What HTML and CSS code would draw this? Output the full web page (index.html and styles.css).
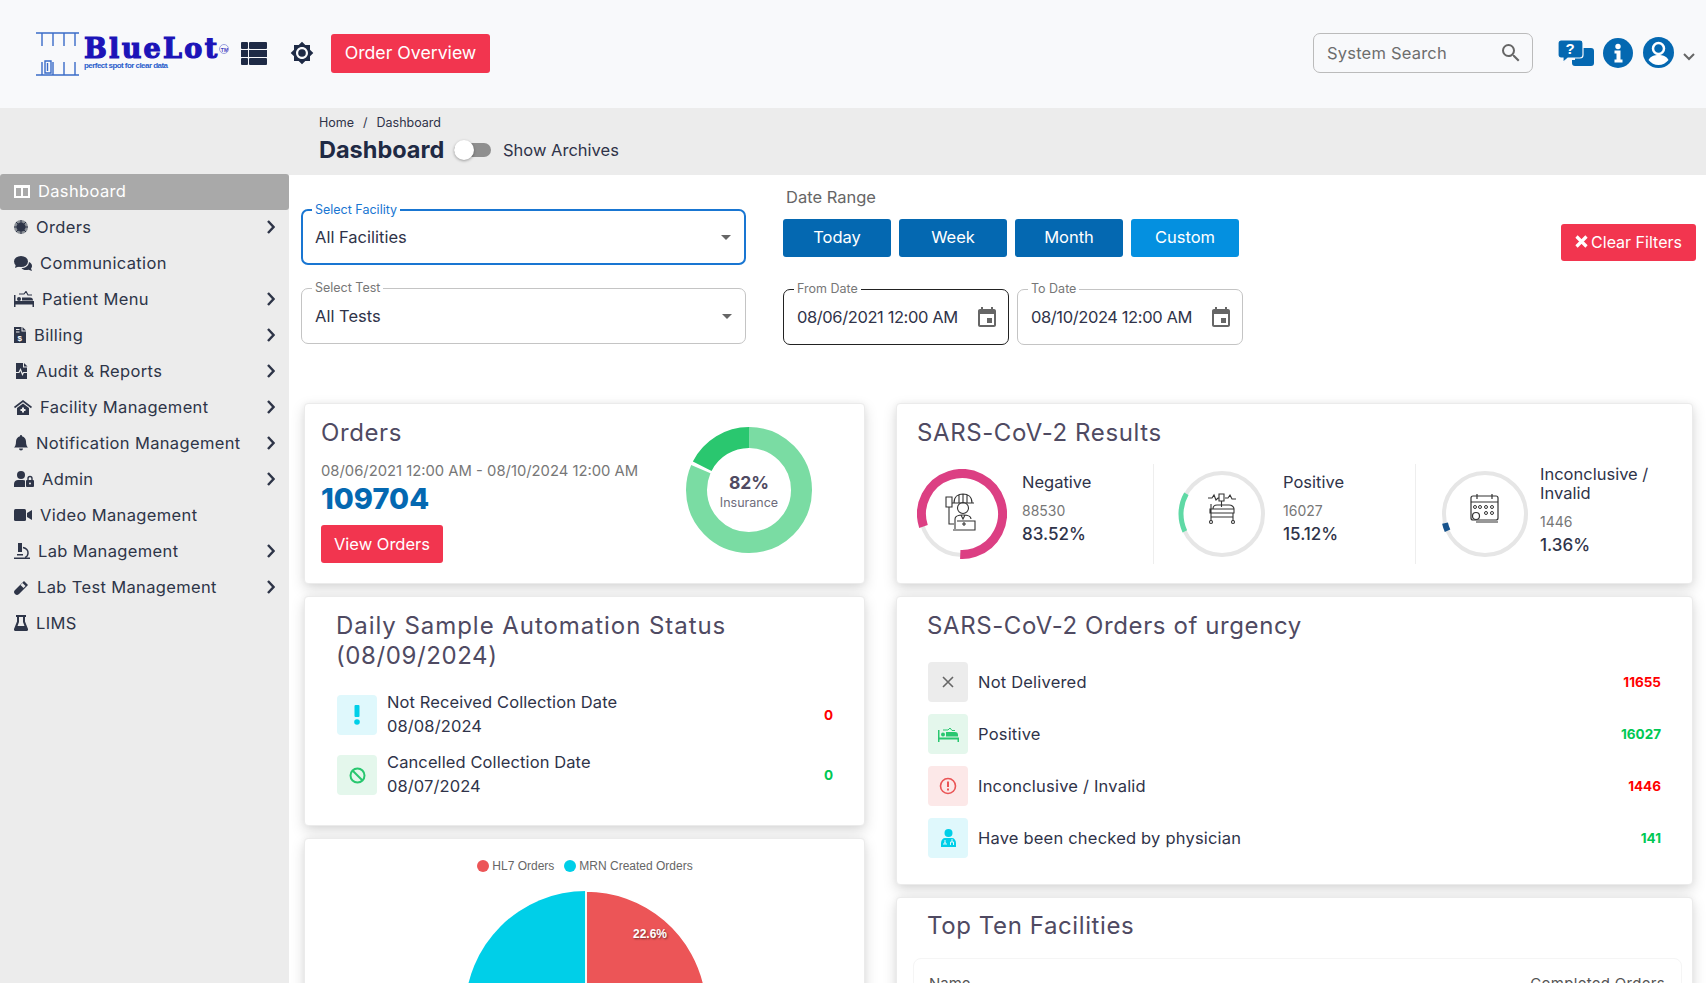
FILE: index.html
```html
<!DOCTYPE html>
<html lang="en">
<head>
<meta charset="utf-8">
<title>BlueLot Dashboard</title>
<link rel="stylesheet" href="styles.css">
</head>
<body>
<header class="topbar">
  <div class="logo">
    <svg class="logo-mark" width="44" height="44" viewBox="0 0 44 44"><g fill="none" stroke="#3a6cc8" stroke-width="1.4"><path d="M0 1h43M6 1v13M17 1v13M28 1v13M39 1v13M0 43h43M6 30v13M28 30v13M39 30v13M17 30v13M9 29h6v12H9zM11.500 31v8"/></g></svg>
    <div class="logo-text">
      <div class="logo-name">BlueLot<span class="logo-tm">TM</span></div>
      <div class="logo-tag">perfect spot for clear data</div>
    </div>
  </div>
  <svg class="tb-list" width="26" height="23" viewBox="0 0 26 23"><g fill="#1e2a45"><rect y="0" width="7" height="7" rx="1"/><rect x="8" y="0" width="18" height="7" rx="1"/><rect y="8" width="7" height="7"/><rect x="8" y="8" width="18" height="7"/><rect y="16" width="7" height="7" rx="1"/><rect x="8" y="16" width="18" height="7" rx="1"/></g></svg>
  <svg class="tb-gear" width="24" height="24" viewBox="0 0 24 24"><path fill="#1e2a45" d="M20 15.310L23.310 12 20 8.690V4h-4.690L12 .69 8.690 4H4v4.690L.69 12 4 15.310V20h4.690L12 23.310 15.310 20H20v-4.690zM12 18c-3.310 0-6-2.690-6-6s2.690-6 6-6 6 2.690 6 6-2.690 6-6 6z"/><circle cx="12" cy="12" r="3.800" fill="#1e2a45"/></svg>
  <button class="btn btn-red btn-overview">Order Overview</button>
  <div class="tb-right">
    <div class="search">
      <span class="search-text">System Search</span>
      <svg width="24" height="24" viewBox="0 0 24 24"><path fill="#666" d="M15.500 14h-.79l-.28-.27A6.471 6.471 0 0 0 16 9.500 6.500 6.500 0 1 0 9.500 16c1.610 0 3.090-.59 4.230-1.570l.27.28v.79l5 4.990L20.490 19l-4.990-5zm-6 0C7.010 14 5 11.990 5 9.500S7.010 5 9.500 5 14 7.010 14 9.500 11.990 14 9.500 14z"/></svg>
    </div>
    <svg class="tb-help" width="36" height="26" viewBox="0 0 36 26"><path fill="#0468b1" d="M17 8h16a3 3 0 0 1 3 3v12a3 3 0 0 1-3 3H17a3 3 0 0 1-3-3v-3h3z"/><path fill="#0468b1" stroke="#f8f9fb" stroke-width="1.200" d="M3 0h19a3 3 0 0 1 3 3v12a3 3 0 0 1-3 3H10l-5 4.500V18H3a3 3 0 0 1-3-3V3a3 3 0 0 1 3-3z"/><text x="12" y="14" class="help-q">?</text></svg>
    <svg class="tb-info" width="30" height="30" viewBox="0 0 30 30"><circle cx="15" cy="15" r="15" fill="#0468b1"/><circle cx="15" cy="8.500" r="2.700" fill="#fff"/><path fill="#fff" d="M11.500 12.500h6v9h2v3h-8v-3h2v-6h-2z"/></svg>
    <svg class="tb-user" width="31" height="31" viewBox="0 0 31 31"><circle cx="15.500" cy="15.500" r="15.500" fill="#0468b1"/><circle cx="15.500" cy="11.500" r="5.500" fill="none" stroke="#fff" stroke-width="2.500"/><path fill="#fff" d="M5.500 23c2-4 6-5 10-5s8 1 10 5c-2.500 3-6 5-10 5s-7.500-2-10-5z"/></svg>
    <svg class="tb-caret" width="12" height="8" viewBox="0 0 12 8"><path fill="none" stroke="#666" stroke-width="2" d="M1 1l5 5 5-5"/></svg>
  </div>
</header>

<section class="crumbbar">
  <div class="crumbs"><span>Home</span><span class="crumb-sep">/</span><span>Dashboard</span></div>
  <div class="title-row">
    <h1>Dashboard</h1>
    <span class="toggle"><span class="toggle-thumb"></span></span>
    <span class="toggle-label">Show Archives</span>
  </div>
</section>

<div class="layout">
  <aside class="sidebar">
    <a class="nav active"><span class="nav-main"><svg class="ic16" width="16" height="13" viewBox="0 0 16 13"><path fill="#fff" d="M0 0h16v13H0zM2 3v8h5V3zm7 0v8h5V3z" fill-rule="evenodd"/></svg>Dashboard</span></a>
    <a class="nav"><span class="nav-main"><svg width="14" height="16" viewBox="0 0 14 16"><circle cx="7" cy="8" r="7" fill="#8a8f96"/><circle cx="7" cy="8" r="4.500" fill="#2e3548"/><path stroke="#2e3548" stroke-width="1" d="M7 1v14M0 8h14M2 3l10 10M12 3L2 13"/></svg>Orders</span><svg class="chev" width="8" height="14" viewBox="0 0 8 14"><path fill="none" stroke="#2e3548" stroke-width="2.400" d="M1 1l5.500 6L1 13"/></svg></a>
    <a class="nav"><span class="nav-main"><svg width="18" height="15" viewBox="0 0 18 15"><ellipse cx="7" cy="5.500" rx="7" ry="5.500" fill="#2e3548"/><path fill="#2e3548" d="M2 8L1 12l5-2zM7.500 12c4 0 7-2 7.500-6 2 .8 3 2.300 3 4 0 1-.5 2-1 2.600l1 2.400-3.500-1.200C11 14.500 9 14 7.500 12z"/></svg>Communication</span></a>
    <a class="nav"><span class="nav-main"><svg width="20" height="16" viewBox="0 0 20 16"><path fill="#2e3548" d="M0 4h1.500v6H20v6h-1.500v-2.500h-17V16H0z"/><circle cx="5" cy="8" r="2" fill="#2e3548"/><path fill="#2e3548" d="M8 6.500h8a3 3 0 0 1 3 3H8z"/><path fill="none" stroke="#2e3548" stroke-width="1.200" d="M5 3h5l2-2.500L14 4h4"/></svg>Patient Menu</span><svg class="chev" width="8" height="14" viewBox="0 0 8 14"><path fill="none" stroke="#2e3548" stroke-width="2.400" d="M1 1l5.500 6L1 13"/></svg></a>
    <a class="nav"><span class="nav-main"><svg width="12" height="16" viewBox="0 0 12 16"><path fill="#2e3548" d="M0 0h7.500v4.500H12V16H0z"/><path fill="#2e3548" d="M8.500 0L12 3.500H8.500z"/><path stroke="#ececec" stroke-width="1" d="M2 2.500h3.500M2 5h3.500"/><text x="6" y="14" class="ic-dollar">$</text></svg>Billing</span><svg class="chev" width="8" height="14" viewBox="0 0 8 14"><path fill="none" stroke="#2e3548" stroke-width="2.400" d="M1 1l5.500 6L1 13"/></svg></a>
    <a class="nav"><span class="nav-main"><svg width="14" height="16" viewBox="0 0 14 16"><path fill="#2e3548" d="M2 0h7v4.500h4V16H2z"/><path fill="#2e3548" d="M10 0l3.500 3.500H10z"/><path fill="none" stroke="#ececec" stroke-width="1.200" d="M0 9.500h5l1.500-3 2 5 1-2h4.500"/></svg>Audit &amp; Reports</span><svg class="chev" width="8" height="14" viewBox="0 0 8 14"><path fill="none" stroke="#2e3548" stroke-width="2.400" d="M1 1l5.500 6L1 13"/></svg></a>
    <a class="nav"><span class="nav-main"><svg width="18" height="15" viewBox="0 0 18 15"><path fill="none" stroke="#2e3548" stroke-width="1.600" d="M.5 7.500L9 1l8.500 6.500"/><path fill="#2e3548" d="M3 8l6-4.500L15 8v7H3z"/><path stroke="#ececec" stroke-width="2" d="M9 7.500v5M6.500 10h5"/></svg>Facility Management</span><svg class="chev" width="8" height="14" viewBox="0 0 8 14"><path fill="none" stroke="#2e3548" stroke-width="2.400" d="M1 1l5.500 6L1 13"/></svg></a>
    <a class="nav"><span class="nav-main"><svg width="14" height="16" viewBox="0 0 14 16"><path fill="#2e3548" d="M7 0c.7 0 1 .5 1 1.200C10.500 1.800 12 4 12 6.500c0 3.500 1 5 2 6H0c1-1 2-2.500 2-6C2 4 3.500 1.800 6 1.200 6 .5 6.300 0 7 0zM5 13.500h4a2 2 0 0 1-4 0z"/></svg>Notification Management</span><svg class="chev" width="8" height="14" viewBox="0 0 8 14"><path fill="none" stroke="#2e3548" stroke-width="2.400" d="M1 1l5.500 6L1 13"/></svg></a>
    <a class="nav"><span class="nav-main"><svg width="20" height="16" viewBox="0 0 20 16"><circle cx="7" cy="4" r="4" fill="#2e3548"/><path fill="#2e3548" d="M0 16v-3c0-2.500 2-4 4-4h5c.8 0 1.500.2 2 .5V16z"/><rect x="12" y="9" width="8" height="7" rx="1" fill="#2e3548"/><path fill="none" stroke="#2e3548" stroke-width="1.400" d="M14 9V7.500a2 2 0 0 1 4 0V9"/><circle cx="16" cy="12.500" r="1" fill="#ececec"/></svg>Admin</span><svg class="chev" width="8" height="14" viewBox="0 0 8 14"><path fill="none" stroke="#2e3548" stroke-width="2.400" d="M1 1l5.500 6L1 13"/></svg></a>
    <a class="nav"><span class="nav-main"><svg width="18" height="12" viewBox="0 0 18 12"><rect width="12" height="12" rx="1.500" fill="#2e3548"/><path fill="#2e3548" d="M13 4l5-3v10l-5-3z"/></svg>Video Management</span></a>
    <a class="nav"><span class="nav-main"><svg width="16" height="16" viewBox="0 0 16 16"><path fill="#2e3548" d="M4 0h4v9H4zM0 14.500h16V16H0zM3 11h6v1.500H3z"/><path fill="none" stroke="#2e3548" stroke-width="1.500" d="M9 4.500c3 .5 5.500 3 5 6-.3 2-1.500 3.500-3 4"/></svg>Lab Management</span><svg class="chev" width="8" height="14" viewBox="0 0 8 14"><path fill="none" stroke="#2e3548" stroke-width="2.400" d="M1 1l5.500 6L1 13"/></svg></a>
    <a class="nav"><span class="nav-main"><svg width="15" height="15" viewBox="0 0 15 15"><path fill="#2e3548" d="M10 1l4 4-9 9a2.800 2.800 0 0 1-4-4z"/><path fill="#ececec" d="M6.500 5l3 3 2-2-3-3z"/></svg>Lab Test Management</span><svg class="chev" width="8" height="14" viewBox="0 0 8 14"><path fill="none" stroke="#2e3548" stroke-width="2.400" d="M1 1l5.500 6L1 13"/></svg></a>
    <a class="nav"><span class="nav-main"><svg width="14" height="16" viewBox="0 0 14 16"><path fill="#2e3548" d="M2 0h10v2h-1v4.500l3 7.500c.3 1-.3 2-1.300 2H1.300C.3 16-.3 15 0 14l3-7.500V2H2zm3 2v5L3.500 11h7L9 7V2z" fill-rule="evenodd"/></svg>LIMS</span></a>
  </aside>

  <main class="main">
    <div class="filters">
      <div class="filter-selects">
        <div class="field field-focus"><label class="field-label">Select Facility</label><span class="field-value">All Facilities</span><span class="arrow"></span></div>
        <div class="field"><label class="field-label">Select Test</label><span class="field-value">All Tests</span><span class="arrow"></span></div>
      </div>
      <div class="filter-dates">
        <div class="range-label">Date Range</div>
        <div class="range-btns">
          <button class="btn btn-blue">Today</button>
          <button class="btn btn-blue">Week</button>
          <button class="btn btn-blue">Month</button>
          <button class="btn btn-sky">Custom</button>
        </div>
        <div class="date-fields">
          <div class="field date-field date-dark"><label class="field-label">From Date</label><span class="field-value">08/06/2021 12:00 AM</span><svg width="24" height="24" viewBox="0 0 24 24"><path fill="#666" d="M19 4h-1V2h-2v2H8V2H6v2H5c-1.100 0-2 .9-2 2v14c0 1.100.9 2 2 2h14c1.100 0 2-.9 2-2V6c0-1.100-.9-2-2-2zm0 16H5V9h14v11zm-2-7h-5v5h5v-5z"/></svg></div>
          <div class="field date-field"><label class="field-label">To Date</label><span class="field-value">08/10/2024 12:00 AM</span><svg width="24" height="24" viewBox="0 0 24 24"><path fill="#666" d="M19 4h-1V2h-2v2H8V2H6v2H5c-1.100 0-2 .9-2 2v14c0 1.100.9 2 2 2h14c1.100 0 2-.9 2-2V6c0-1.100-.9-2-2-2zm0 16H5V9h14v11zm-2-7h-5v5h5v-5z"/></svg></div>
        </div>
      </div>
      <button class="btn btn-red btn-clear"><svg width="13" height="13" viewBox="0 0 13 13"><path stroke="#fff" stroke-width="3.200" d="M1.500 1.500l10 10M11.500 1.500l-10 10"/></svg>Clear Filters</button>
    </div>

    <div class="dash">
      <div class="col">
        <section class="card card-orders">
          <div class="orders-info">
            <h2>Orders</h2>
            <div class="orders-range">08/06/2021 12:00 AM - 08/10/2024 12:00 AM</div>
            <div class="orders-total">109704</div>
            <button class="btn btn-red btn-view">View Orders</button>
          </div>
          <div class="donut">
            <svg width="126" height="126" viewBox="0 0 126 126">
              <circle cx="63" cy="63" r="52.500" fill="none" stroke="#7adca3" stroke-width="21" stroke-dasharray="268 62" transform="rotate(-89.500 63 63)"/>
              <circle cx="63" cy="63" r="52.500" fill="none" stroke="#2ac76f" stroke-width="21" stroke-dasharray="58 272" transform="rotate(-153 63 63)"/>
            </svg>
            <div class="donut-label"><b>82%</b><span>Insurance</span></div>
          </div>
        </section>

        <section class="card card-daily">
          <h2>Daily Sample Automation Status<br><span class="h2-date">(08/09/2024)</span></h2>
          <div class="daily-row">
            <span class="sq sq-cyan"><svg width="8" height="22" viewBox="0 0 8 22"><rect x="1.500" y="1" width="5" height="12" rx="1" fill="#00cfe8"/><circle cx="4" cy="18" r="2.800" fill="#00cfe8"/></svg></span>
            <div class="daily-text"><div>Not Received Collection Date</div><div>08/08/2024</div></div>
            <b class="num red">0</b>
          </div>
          <div class="daily-row">
            <span class="sq sq-green"><svg width="17" height="17" viewBox="0 0 17 17"><circle cx="8.500" cy="8.500" r="7" fill="none" stroke="#28c76f" stroke-width="2"/><path stroke="#28c76f" stroke-width="2" d="M3.500 3.500l10 10"/></svg></span>
            <div class="daily-text"><div>Cancelled Collection Date</div><div>08/07/2024</div></div>
            <b class="num green">0</b>
          </div>
        </section>

        <section class="card card-pie">
          <div class="legend">
            <span class="legend-dot dot-red"></span><span class="legend-text">HL7 Orders</span>
            <span class="legend-dot dot-cyan"></span><span class="legend-text">MRN Created Orders</span>
          </div>
          <svg class="pie" width="246" height="246" viewBox="0 0 246 246">
            <circle cx="123" cy="123" r="121" fill="#00cfe8"/>
            <path fill="#ec5557" stroke="#fff" stroke-width="1.500" d="M123 123V2A121 121 0 0 1 242.500 104z"/>
            <path stroke="#fff" stroke-width="1.500" d="M123 123V2"/>
            <text x="187" y="49" class="pie-label">22.6%</text>
          </svg>
        </section>
      </div>

      <div class="col">
        <section class="card card-results">
          <h2>SARS-CoV-2 Results</h2>
          <div class="results">
            <div class="result res-1">
              <div class="ring">
                <svg width="90" height="90" viewBox="0 0 90 90">
                  <circle cx="45" cy="45" r="41" fill="none" stroke="#e6e6e6" stroke-width="4"/>
                  <circle cx="45" cy="45" r="40.500" fill="none" stroke="#dc3f83" stroke-width="9" stroke-dasharray="205 60" transform="rotate(162 45 45)"/>
                  <g fill="none" stroke="#333" stroke-width="1.100">
                    <path d="M37 34c0-6 4-9 9-9s9 3 9 9zM35 34h22M46 25v9M42 26v8M50 26v8"/>
                    <circle cx="46" cy="39" r="5.500"/>
                    <path d="M38 60V50c0-3 3-4 8-4s8 1 8 4"/>
                    <path d="M40 52h18v9H36M29 28h6v10h-6zM32 38v17h5"/>
                    <path d="M44 46l2 4 2-4M45 55h4M47 53v4"/>
                  </g>
                </svg>
              </div>
              <div class="res-text"><div class="res-name">Negative</div><div class="res-count">88530</div><div class="res-pct">83.52%</div></div>
            </div>
            <div class="result res-2">
              <div class="ring">
                <svg width="90" height="90" viewBox="0 0 90 90">
                  <circle cx="45" cy="45" r="41" fill="none" stroke="#e6e6e6" stroke-width="4"/>
                  <circle cx="45" cy="45" r="41" fill="none" stroke="#5fd9a5" stroke-width="5" stroke-dasharray="39 220" transform="rotate(155 45 45)"/>
                  <g fill="none" stroke="#333" stroke-width="1.100">
                    <path d="M31 29h4l2-3 2 5 2-2h1M48 29h3l2-3 2 4h4M42 25h5v7h-5zM44.500 32v6"/>
                    <path d="M33 40h24v4H33zM36 40c0-3 2-4 4-4h12c3 0 5 2 5 4M34 35v17M56 44v8M34 48h22"/>
                    <circle cx="34" cy="53" r="1.500"/><circle cx="56" cy="53" r="1.500"/>
                  </g>
                </svg>
              </div>
              <div class="res-text"><div class="res-name">Positive</div><div class="res-count">16027</div><div class="res-pct">15.12%</div></div>
            </div>
            <div class="result res-3">
              <div class="ring">
                <svg width="90" height="90" viewBox="0 0 90 90">
                  <circle cx="45" cy="45" r="41" fill="none" stroke="#e6e6e6" stroke-width="4"/>
                  <circle cx="45" cy="45" r="41" fill="none" stroke="#17538c" stroke-width="6" stroke-dasharray="8 250" transform="rotate(156 45 45)"/>
                  <g fill="none" stroke="#333" stroke-width="1.200">
                    <rect x="31" y="27" width="27" height="24" rx="2"/>
                    <path d="M31 33h27M37 25v5M52 25v5M36 53h22"/>
                    <g stroke-width="1"><circle cx="40" cy="38" r="1.500"/><circle cx="46" cy="38" r="1.500"/><circle cx="52" cy="38" r="1.500"/><circle cx="46" cy="44" r="1.500"/><circle cx="52" cy="44" r="1.500"/><circle cx="35" cy="38" r="1.500"/></g>
                    <circle cx="36" cy="47" r="3.500"/>
                  </g>
                </svg>
              </div>
              <div class="res-text"><div class="res-name">Inconclusive / Invalid</div><div class="res-count">1446</div><div class="res-pct">1.36%</div></div>
            </div>
          </div>
        </section>

        <section class="card card-urgency">
          <h2>SARS-CoV-2 Orders of urgency</h2>
          <div class="urg-row"><span class="sq sq-grey"><svg width="14" height="14" viewBox="0 0 14 14"><path stroke="#666" stroke-width="1.600" d="M2 2l10 10M12 2L2 12"/></svg></span><span class="urg-name">Not Delivered</span><b class="num red">11655</b></div>
          <div class="urg-row"><span class="sq sq-green"><svg width="21" height="15" viewBox="0 0 21 15"><path fill="#28c76f" d="M0 3h1.500v7.500H21V15h-1.500v-2.500h-18V15H0z"/><circle cx="5" cy="7.500" r="2" fill="#28c76f"/><path fill="#28c76f" d="M8 5h9a3 3 0 0 1 3 3v1.500H8z"/><path fill="none" stroke="#28c76f" stroke-width="1" d="M5 3h5l2-2 2 2.500h3"/></svg></span><span class="urg-name">Positive</span><b class="num green">16027</b></div>
          <div class="urg-row"><span class="sq sq-pink"><svg width="18" height="18" viewBox="0 0 18 18"><circle cx="9" cy="9" r="7.500" fill="none" stroke="#ea5455" stroke-width="1.600"/><path stroke="#ea5455" stroke-width="2" d="M9 4.500v5.500M9 11.500v2"/></svg></span><span class="urg-name">Inconclusive / Invalid</span><b class="num red">1446</b></div>
          <div class="urg-row"><span class="sq sq-cyan"><svg width="15" height="18" viewBox="0 0 15 18"><circle cx="7.500" cy="4" r="4" fill="#00cfe8"/><path fill="#00cfe8" d="M0 18v-4c0-3 2-5 4-5h7c2 0 4 2 4 5v4z"/><path fill="none" stroke="#dff8fc" stroke-width="1" d="M4 11v3M11 10v3M3 16v-2h2v2M9.500 16v-3h3v3"/></svg></span><span class="urg-name">Have been checked by physician</span><b class="num green">141</b></div>
        </section>

        <section class="card card-top">
          <h2>Top Ten Facilities</h2>
          <div class="top-table">
            <span>Name</span><span class="top-col">Completed Orders</span>
          </div>
        </section>
      </div>
    </div>
  </main>
</div>
</body>
</html>
```

FILE: styles.css
```css
* { box-sizing: border-box; }
html, body { margin: 0; height: 983px; overflow: hidden; }
body { font-family: Inter, "Liberation Sans", sans-serif; color: #2f3349; background: #fff; font-size: 16.500px; }
h1, h2 { margin: 0; font-weight: 500; }
svg { display: block; flex: none; }

.topbar { height: 108px; background: #f8f9fb; display: flex; align-items: center; padding: 0 11px 2px 36px; }
.logo { display: flex; align-items: center; gap: 4px; width: 205px; margin-top: 1px; }
.logo-name { font-family: "DejaVu Serif", serif; font-weight: 700; font-size: 27px; line-height: 25px; color: #1c14b8; -webkit-text-stroke: 1.200px #1c14b8; white-space: nowrap; letter-spacing: 2.300px; display: flex; align-items: center; }
.logo-tm { font: 700 5px/10px "Liberation Sans", sans-serif; -webkit-text-stroke: 0; letter-spacing: 0; border: 1px solid #9aa0e0; border-radius: 50%; width: 10px; height: 10px; text-align: center; color: #3a3ac0; overflow: hidden; }
.logo-tag { font: 700 8px/10px "Liberation Sans", sans-serif; letter-spacing: -.55px; color: #2a5ecb; white-space: nowrap; }
.tb-list { margin: 0 24px 0 0; }
.tb-gear { margin-right: 17px; margin-left: -1px; }
.btn { border: 0; border-radius: 3px; color: #fff; font-family: inherit; display: inline-flex; align-items: center; justify-content: center; padding: 0; }
.btn-red { background: #f2354f; }
.btn-blue { background: #0468b1; }
.btn-sky { background: #0490e0; }
.btn-overview { width: 159px; height: 39px; font-size: 17.700px; padding-bottom: 2px; }
.tb-right { margin-left: auto; display: flex; align-items: center; }
.search { width: 220px; height: 40px; border: 1px solid #bbb; border-radius: 7px; display: flex; align-items: center; justify-content: space-between; padding: 0 9px 0 13px; margin-right: 25px; }
.search-text { color: #6d6d6d; font-size: 16.500px; letter-spacing: .2px; }
.tb-help { margin-right: 9px; }
.tb-info { margin-right: 10px; }
.tb-user { margin-right: 9px; margin-top: -1px; }
.tb-caret { margin-top: 8px; }
.help-q { font: 700 15px "Liberation Sans", sans-serif; fill: #fff; text-anchor: middle; }

.crumbbar { height: 66px; background: #ececec; padding: 6px 0 0 319px; }
.crumbs { font-size: 12.500px; line-height: 18px; display: flex; gap: 9px; }
.title-row { display: flex; align-items: center; margin-top: 2px; height: 30px; }
h1 { font-size: 23.500px; font-weight: 700; color: #1f2a44; width: 135px; }
.toggle { width: 37px; height: 14px; border-radius: 7px; background: #8f8f8f; position: relative; margin-right: 12px; margin-top: 2px; }
.toggle-thumb { position: absolute; left: 0; top: -3px; width: 20px; height: 20px; border-radius: 50%; background: #fff; box-shadow: 0 1px 3px rgba(0,0,0,.35); }
.toggle-label { font-size: 16.500px; margin-top: 1px; }

.layout { display: flex; height: 809px; }
.sidebar { width: 289px; flex: none; background: #ececec; font-size: 16.500px; color: #2e3548; }
.nav { height: 36px; display: flex; align-items: center; justify-content: space-between; padding: 0 14px 2px; }
.nav-main { display: flex; align-items: center; gap: 8px; letter-spacing: .35px; }
.nav.active { background: #a9a9a9; color: #fff; border-radius: 3px; }

.main { flex: 1; min-width: 0; border-top: 1px solid #ececec; overflow: hidden; }
.filters { display: flex; align-items: flex-start; padding: 34px 10px 0 12px; height: 228px; }
.filter-selects { width: 445px; display: flex; flex-direction: column; gap: 23px; margin-right: 37px; }
.field { position: relative; border: 1px solid #c4c4c4; border-radius: 7px; height: 56px; display: flex; align-items: center; padding: 0 13px; }
.field-focus { border: 2px solid #1976d2; padding: 0 12px; }
.field-focus .field-label { color: #1976d2; left: 9px; }
.field-label { position: absolute; top: -8px; left: 10px; background: #fff; padding: 0 3px; font-size: 12.500px; line-height: 14px; color: #777; }
.field-value { font-size: 16.500px; }
.arrow { position: absolute; right: 13px; top: 50%; margin-top: -2px; border: 5px solid transparent; border-top: 5px solid #666; border-bottom: 0; }
.filter-dates { width: 460px; margin-top: -25px; }
.range-label { color: #666; font-size: 16.500px; line-height: 24px; margin-left: 3px; height: 35px; padding-top: 1px; }
.range-btns { display: flex; gap: 8px; }
.range-btns .btn { width: 108px; height: 38px; font-size: 16.500px; padding-bottom: 2px; }
.date-fields { display: flex; gap: 8px; margin-top: 32px; }
.date-field { width: 226px; height: 56px; justify-content: space-between; padding: 0 9px 0 13px; }
.date-field .field-value { letter-spacing: -.4px; }
.date-dark { border-color: #222; }
.btn-clear { margin-left: auto; margin-top: 15px; width: 135px; height: 37px; font-size: 16px; gap: 3px; padding-bottom: 2px; }

.dash { display: grid; grid-template-columns: 561px 797px; gap: 31px; padding-left: 15px; }
.col { display: flex; flex-direction: column; gap: 12px; }
.card { background: #fff; border-radius: 4px; border: 1px solid #ebebeb; box-shadow: 0 5px 14px rgba(0,0,0,.15), 0 0 6px rgba(0,0,0,.04); }
h2 { font-size: 24px; line-height: 30px; color: #4f4a62; font-weight: 400; letter-spacing: .6px; }

.card-orders { height: 181px; display: flex; justify-content: space-between; padding: 14px 52px 0 16px; }
.orders-range { color: #777; font-size: 14.800px; line-height: 20px; margin-top: 13px; white-space: nowrap; }
.orders-total { font-size: 29px; font-weight: 800; line-height: 35px; color: #0468b1; }
.btn-view { width: 122px; height: 38px; font-size: 16.500px; margin-top: 9px; }
.donut { position: relative; width: 126px; height: 126px; margin-top: 9px; }
.donut-label { position: absolute; inset: 0; display: flex; flex-direction: column; align-items: center; justify-content: center; padding-top: 3px; }
.donut-label b { font-size: 17.500px; line-height: 22px; font-weight: 700; color: #4f4a62; }
.donut-label span { font-size: 12.500px; line-height: 18px; color: #6e6b7b; }

.card-daily { height: 230px; padding: 14px 24px 0 32px; }
.card-daily h2 { margin: 0 0 24px -1px; letter-spacing: .95px; }
.h2-date { color: #4f4a62; letter-spacing: .6px; }
.daily-row { display: flex; align-items: center; height: 40px; margin-bottom: 20px; }
.sq { width: 40px; height: 40px; border-radius: 4px; display: flex; align-items: center; justify-content: center; flex: none; }
.sq-cyan { background: #dff8fc; }
.sq-green { background: #e4f7ec; }
.sq-grey { background: #ececec; }
.sq-pink { background: #fce8e8; }
.daily-text { margin-left: 10px; flex: 1; font-size: 16.500px; line-height: 24px; letter-spacing: .1px; padding-bottom: 2px; }
.num { font-size: 13.500px; font-weight: 700; }
.red { color: #ff0000; }
.green { color: #00c853; }
.daily-row .num { margin-right: 7px; }

.card-pie { height: 160px; overflow: hidden; display: flex; flex-direction: column; align-items: center; padding: 19px 0 0 2px; }
.legend { display: flex; align-items: center; font: 12px/16px "Liberation Sans", sans-serif; color: #666; margin-left: -1px; }
.legend-dot { width: 12px; height: 12px; border-radius: 50%; margin-right: 3px; }
.dot-red { background: #ec5557; }
.dot-cyan { background: #00cfe8; margin-left: 10px; }
.pie { margin-top: 15px; }
.pie-label { font: 700 12px "Liberation Sans", sans-serif; fill: #fff; text-anchor: middle; text-shadow: 1px 1px 2px rgba(0,0,0,.5); }

.card-results { height: 181px; padding: 14px 0 0 20px; }
.results { display: flex; margin-top: 16px; height: 100px; }
.result { display: flex; align-items: center; gap: 15px; }
.res-1 { width: 236px; }
.res-2 { width: 263px; padding-left: 23px; gap: 16px; border-left: 1px solid #eee; border-right: 1px solid #eee; }
.res-3 { padding-left: 24px; gap: 10px; }
.res-text { padding-bottom: 8px; }
.res-3 .res-text { width: 130px; padding-bottom: 6px; }
.res-name { font-size: 16.500px; line-height: 19px; }
.res-count { color: #777; font-size: 14px; line-height: 20px; margin-top: 9px; }
.res-pct { font-size: 17px; line-height: 26px; font-weight: 500; }

.card-urgency { height: 289px; padding: 14px 31px 0 31px; }
.card-urgency h2 { margin: 0 0 21px -1px; }
.urg-row { display: flex; align-items: center; height: 40px; margin-bottom: 12px; }
.urg-name { margin-left: 10px; flex: 1; font-size: 16.500px; letter-spacing: .2px; padding-bottom: 1px; }

.card-top { height: 200px; padding: 13px 10px 0 16px; }
.card-top h2 { margin-left: 14px; }
.top-table { border: 1px solid #f5f5f5; border-radius: 8px; margin-top: 17px; padding: 15px 16px 0 15px; display: flex; justify-content: space-between; color: #555; font-size: 15px; height: 100px; }
.top-col { letter-spacing: .3px; }
.ic-dollar { font: 700 8px "Liberation Sans", sans-serif; fill: #fff; text-anchor: middle; }
```
